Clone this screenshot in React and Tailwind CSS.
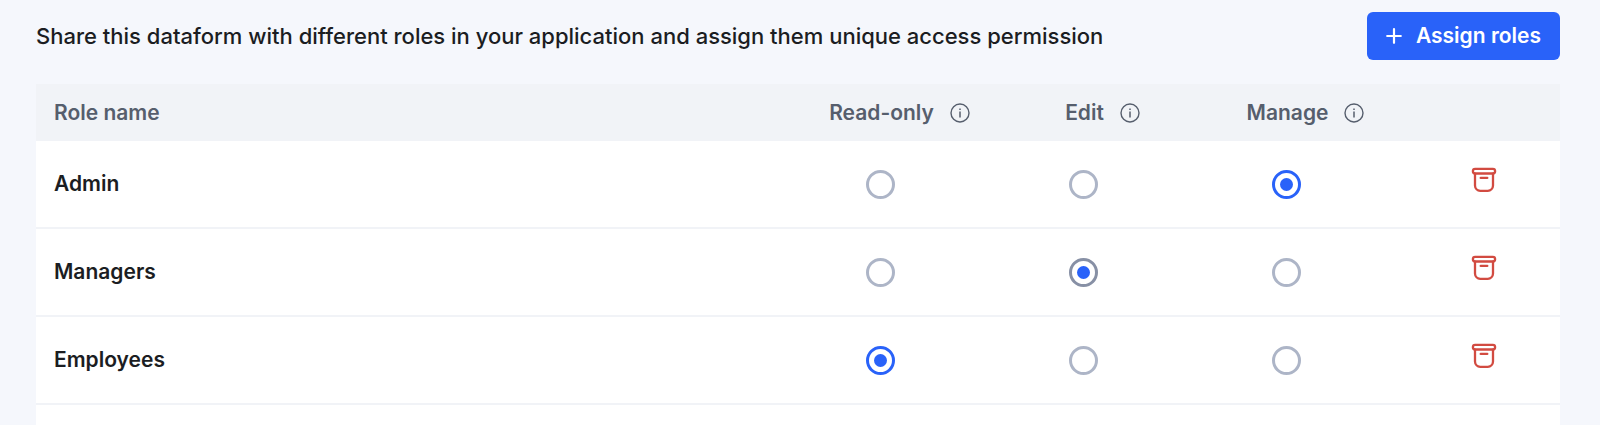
import { useState } from "react";

const LEVELS = ["Read-only", "Edit", "Manage"];

const INITIAL_ROLES = [
  { name: "Admin", level: "Manage" },
  { name: "Managers", level: "Edit", focused: true },
  { name: "Employees", level: "Read-only" },
];

function PlusIcon() {
  return (
    <svg className="size-4 shrink-0" viewBox="0 0 16 16" fill="none" stroke="currentColor" strokeWidth="2.2" strokeLinecap="round" aria-hidden="true">
      <path d="M8 1.2v13.6M1.2 8h13.6" />
    </svg>
  );
}

function InfoIcon() {
  return (
    <svg className="size-5 shrink-0" viewBox="0 0 20 20" fill="none" stroke="currentColor" aria-hidden="true">
      <circle cx="10" cy="10" r="9" strokeWidth="1.4" />
      <path d="M10 8.4v6" strokeWidth="1.5" />
      <path d="M10 5.6v1.5" strokeWidth="1.5" />
    </svg>
  );
}

function BinIcon() {
  return (
    <svg className="block size-[26px]" viewBox="0 0 26 26" fill="none" stroke="currentColor" strokeWidth="2.3" strokeLinecap="round" strokeLinejoin="round" aria-hidden="true">
      <rect x="1.9" y="1.9" width="22.2" height="4.6" rx="2.2" />
      <path d="M4 6.6v12a5.2 5.2 0 0 0 5.2 5.2h7.6a5.2 5.2 0 0 0 5.2-5.2v-12" />
      <path d="M9.7 10.9h6.6" />
    </svg>
  );
}

export default function App() {
  const [roles, setRoles] = useState(INITIAL_ROLES);

  const setLevel = (name, level) =>
    setRoles(roles.map((r) => (r.name === name ? { ...r, level, focused: false } : r)));
  const removeRole = (name) => setRoles(roles.filter((r) => r.name !== name));

  return (
    <main className="flex min-h-screen flex-col bg-[#f5f7fc] pl-9 pr-10 pt-3 font-['Inter',sans-serif] text-[#1b1d22]">
      <header className="mb-6 flex items-center justify-between gap-6">
        <p className="text-[22px] font-medium leading-7">
          Share this dataform with different roles in your application and assign them unique access permission
        </p>
        <button type="button" className="flex h-12 shrink-0 items-center gap-[14px] rounded-md bg-[#2962f9] px-[19px] text-[21px] font-semibold text-white">
          <PlusIcon />
          Assign roles
        </button>
      </header>

      <div className="flex-1 bg-white">
        <table className="w-full table-fixed border-separate border-spacing-0 text-[21px] leading-7">
          <colgroup>
            <col />
            <col className="w-[203px]" />
            <col className="w-[203px]" />
            <col className="w-[203px]" />
            <col className="w-[172px]" />
          </colgroup>
          <thead className="bg-[#f1f3f7] text-[#565e6d]">
            <tr className="h-[57px]">
              <th scope="col" className="pl-[18px] text-left font-semibold">Role name</th>
              {LEVELS.map((level) => (
                <th key={level} scope="col" className="p-0 pl-[38px] font-semibold">
                  <span className="flex items-center justify-center gap-4 whitespace-nowrap">
                    {level}
                    <InfoIcon />
                  </span>
                </th>
              ))}
              <td />
            </tr>
          </thead>
          <tbody>
            {roles.map((role) => (
              <tr key={role.name} className="h-[88px] *:border-b-2 *:border-[#f1f3f7]">
                <th scope="row" className="pl-[18px] text-left font-semibold">{role.name}</th>
                {LEVELS.map((level) => (
                  <td key={level} className="p-0">
                    <input
                      type="radio"
                      name={role.name}
                      aria-label={`${role.name}: ${level}`}
                      checked={role.level === level}
                      onChange={() => setLevel(role.name, level)}
                      className={`mx-auto grid size-[29px] appearance-none place-content-center rounded-full border-3 border-[#adb5c7] bg-white checked:before:block checked:before:size-[13px] checked:before:rounded-full checked:before:bg-[#2962f9] checked:before:content-[''] ${
                        role.focused ? "checked:border-[#8790a5]" : "checked:border-[#2962f9]"
                      }`}
                    />
                  </td>
                ))}
                <td className="p-0 pb-2 pl-5">
                  <button type="button" aria-label={`Remove ${role.name}`} onClick={() => removeRole(role.name)} className="mx-auto block text-[#d24b41]">
                    <BinIcon />
                  </button>
                </td>
              </tr>
            ))}
          </tbody>
        </table>
      </div>
    </main>
  );
}
